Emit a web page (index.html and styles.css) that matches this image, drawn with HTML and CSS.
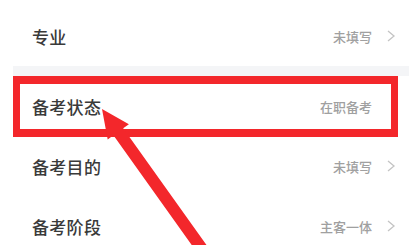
FILE: index.html
```html
<!DOCTYPE html>
<html lang="zh">
<head>
<meta charset="utf-8">
<title>备考信息</title>
<link rel="stylesheet" href="styles.css">
</head>
<body>
<div class="page">
  <div class="list">
    <div class="row">
      <span class="label">专业</span>
      <span class="value">未填写</span>
      <svg class="chev" viewBox="0 0 10 12" width="10" height="12"><polyline points="2,1 8,6 2,11"/></svg>
    </div>
  </div>
  <div class="gap"></div>
  <div class="list">
    <div class="row">
      <span class="label">备考状态</span>
      <span class="value">在职备考</span>
      <svg class="chev hidden" viewBox="0 0 10 12" width="10" height="12"><polyline points="2,1 8,6 2,11"/></svg>
    </div>
    <div class="row">
      <span class="label">备考目的</span>
      <span class="value">未填写</span>
      <svg class="chev" viewBox="0 0 10 12" width="10" height="12"><polyline points="2,1 8,6 2,11"/></svg>
    </div>
    <div class="row">
      <span class="label">备考阶段</span>
      <span class="value">主客一体</span>
      <svg class="chev" viewBox="0 0 10 12" width="10" height="12"><polyline points="2,1 8,6 2,11"/></svg>
    </div>
  </div>
  <div class="highlight"></div>
  <svg class="arrow" viewBox="0 0 409 245" width="409" height="245">
    <polygon points="102,109 128.9,124.2 123.2,128.3 214.7,256.5 204.9,263.5 113.4,135.3 107.7,139.4"/>
  </svg>
</div>
</body>
</html>
```
FILE: styles.css
```css
html, body {
  margin: 0;
  padding: 0;
  background: #ffffff;
}
body {
  font-family: "Noto Sans CJK SC", "Noto Sans", sans-serif;
}
.page {
  position: relative;
  width: 409px;
  height: 245px;
  overflow: hidden;
  padding-top: 6px;
  box-sizing: border-box;
}
.list {
  display: flex;
  flex-direction: column;
}
.row {
  display: flex;
  align-items: center;
  height: 60px;
  padding: 0 13px 0 32px;
}
.label {
  flex: 1;
  font-size: 17px;
  font-weight: 500;
  color: #3a3a3a;
  letter-spacing: 0.3px;
}
.value {
  font-size: 13px;
  font-weight: 500;
  color: #a0a0a0;
  margin-right: 14px;
}
.chev {
  display: block;
  fill: none;
  stroke: #c4c4c4;
  stroke-width: 1.3;
}
.chev.hidden {
  visibility: hidden;
}
.gap {
  height: 10px;
  margin-left: 13px;
  background: #f4f5f7;
}
.highlight {
  position: absolute;
  left: 13px;
  top: 76px;
  width: 385px;
  height: 61px;
  box-sizing: border-box;
  border-style: solid;
  border-color: #f3272b;
  border-width: 8px 7px;
}
.arrow {
  position: absolute;
  left: 0;
  top: 0;
  fill: #f3272b;
}
```
